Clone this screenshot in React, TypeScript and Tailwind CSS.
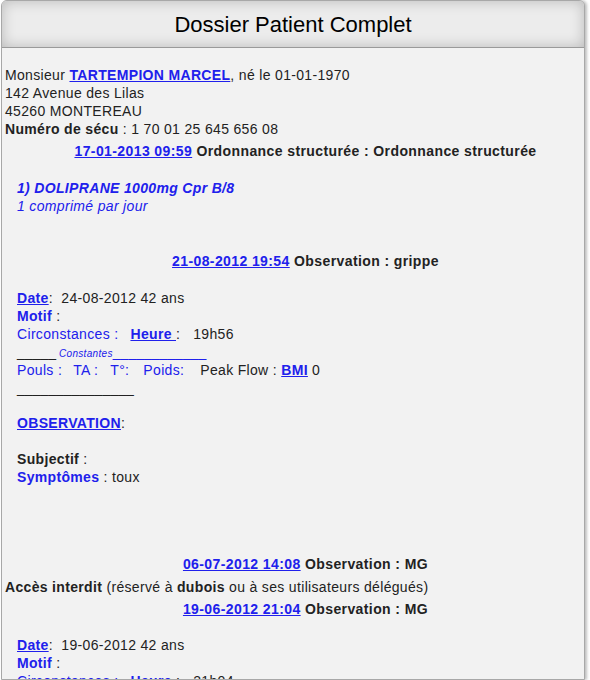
const blue = "text-[#2020ec]";

const Line = ({ className = "", children }: { className?: string; children: React.ReactNode }) => (
  <div className={`h-[18px] leading-[18px] whitespace-nowrap ${className}`}>{children}</div>
);

const Heading = ({ date, title, className = "" }: { date: string; title: string; className?: string }) => (
  <Line className={`text-center pl-[25px] font-bold tracking-[0.4px] ${className}`}>
    <a href="#" className={`${blue} underline`}>{date}</a> <span>{title}</span>
  </Line>
);

const App = () => {
  return (
    <div className="min-h-screen bg-white text-[14px] tracking-[0.33px] text-[#222] font-['Liberation_Sans',Arial,sans-serif]">
      <div className="ml-[1px] w-[584px] h-[680px] overflow-hidden rounded-t-[6px] border border-[#a8a8a8] bg-[#f2f2f2] shadow-[2px_0_3px_rgba(0,0,0,0.25)]">
        {/* Header */}
        <div className="h-[47px] flex items-center justify-center bg-[#ececec] border-b border-[#9a9a9a] shadow-[inset_0_0_14px_rgba(0,0,0,0.22)]">
          <h1 className="text-[22px] tracking-normal text-black">Dossier Patient Complet</h1>
        </div>

        <div className="px-[3px] pt-[18px]">
          {/* Patient */}
          <Line>
            Monsieur <a href="#" className={`${blue} font-bold underline`}>TARTEMPION MARCEL</a>, né le 01-01-1970
          </Line>
          <Line>142 Avenue des Lilas</Line>
          <Line>45260 MONTEREAU</Line>
          <Line>
            <b>Numéro de sécu</b> : 1 70 01 25 645 656 08
          </Line>

          {/* Ordonnance */}
          <Heading className="mt-[4px]" date="17-01-2013 09:59" title="Ordonnance structurée : Ordonnance structurée" />
          <div className={`pl-[12px] mt-[19px] ${blue} italic`}>
            <Line className="font-bold">1) DOLIPRANE 1000mg Cpr B/8</Line>
            <Line>1 comprimé par jour</Line>
          </div>

          {/* Observation grippe */}
          <Heading className="mt-[37px]" date="21-08-2012 19:54" title="Observation : grippe" />
          <div className="pl-[12px] mt-[19px]">
            <Line>
              <a href="#" className={`${blue} font-bold underline`}>Date</a>:&nbsp; 24-08-2012 42 ans
            </Line>
            <Line>
              <b className={blue}>Motif</b> :
            </Line>
            <Line>
              <span className={blue}>Circonstances :</span>
              <a href="#" className={`${blue} font-bold underline ml-[12px]`}>Heure </a>:
              <span className="ml-[13px]">19h56</span>
            </Line>
            <Line>
              <span className="tracking-normal">_____</span>
              <span className={`${blue} text-[10px] italic ml-[3px]`}>Constantes</span>
              <span className={`${blue} tracking-normal`}>____________</span>
            </Line>
            <Line>
              <span className={blue}>Pouls :</span>
              <span className={`${blue} ml-[11px]`}>TA :</span>
              <span className={`${blue} ml-[12px]`}>T°:</span>
              <span className={`${blue} ml-[14px]`}>Poids:</span>
              <span className="ml-[16px]">Peak Flow : </span>
              <a href="#" className={`${blue} font-bold underline`}>BMI</a> 0
            </Line>
            <Line className="tracking-normal">_______________</Line>
            <Line className="mt-[17px]">
              <a href="#" className={`${blue} font-bold underline`}>OBSERVATION</a>:
            </Line>
            <Line className="mt-[18px]">
              <b>Subjectif</b> :
            </Line>
            <Line>
              <b className={blue}>Symptômes</b> : toux
            </Line>
          </div>

          {/* Observation MG */}
          <Heading className="mt-[69px]" date="06-07-2012 14:08" title="Observation : MG" />
          <Line className="mt-[5px]">
            <b>Accès interdit</b> (réservé à <b>dubois</b> ou à ses utilisateurs délégués)
          </Line>
          <Heading className="mt-[4px]" date="19-06-2012 21:04" title="Observation : MG" />
          <div className="pl-[12px] mt-[18px]">
            <Line>
              <a href="#" className={`${blue} font-bold underline`}>Date</a>:&nbsp; 19-06-2012 42 ans
            </Line>
            <Line>
              <b className={blue}>Motif</b> :
            </Line>
            <Line>
              <span className={blue}>Circonstances :</span>
              <a href="#" className={`${blue} font-bold underline ml-[12px]`}>Heure </a>:
              <span className="ml-[13px]">21h04</span>
            </Line>
          </div>
        </div>
      </div>
    </div>
  );
};

export default App;
